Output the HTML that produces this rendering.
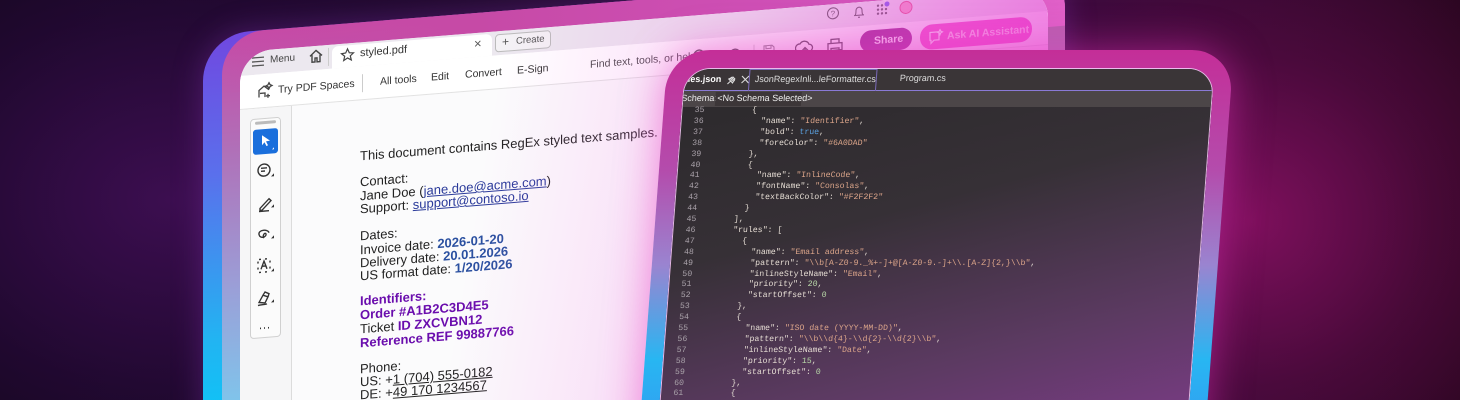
<!DOCTYPE html>
<html><head><meta charset="utf-8"><style>
*{margin:0;padding:0;box-sizing:border-box}
html,body{width:1460px;height:400px;overflow:hidden}
#root{position:absolute;left:0;top:0;width:1460px;height:400px;overflow:hidden;font-family:"Liberation Sans",sans-serif;
background:
radial-gradient(ellipse 330px 300px at 1250px 220px,rgba(130,16,95,.95),rgba(100,12,75,.5) 55%,rgba(0,0,0,0) 100%),
radial-gradient(ellipse 420px 320px at 170px 200px,rgba(60,14,80,1),rgba(40,10,60,.6) 60%,rgba(0,0,0,0) 100%),
linear-gradient(90deg,#14061c 0%,#230a30 40%,#3a0a40 70%,#2a0620 100%);}
.abs{position:absolute}
#pdf{left:203px;top:35px;width:862px;height:470px;border-radius:46px;transform-origin:0 0;transform:skewY(-4.6deg);
background:linear-gradient(180deg,#7048e0 0%,#5a70ec 30%,#22b4f2 65%,#10c2f6 80%,#3aa8ee 100%);
box-shadow:0 0 30px rgba(150,60,200,.35)}
#pdf .band{left:19px;top:0;right:0;bottom:0;border-radius:42px;
background:linear-gradient(180deg,#c64aa6 0%,#b070b8 25%,#9aa0d8 55%,#7ec6ec 80%,#90c8ee 100%)}
#pdf .band2{left:19px;top:0;right:0;height:60px;border-radius:42px 42px 0 0;
background:linear-gradient(90deg,rgba(200,70,160,0) 0%,#c64aa6 30%,#d050b8 70%,#e060c8 100%)}
#win{left:37px;top:20px;width:808px;height:450px;border-radius:32px 30px 0 0;background:#fbfbfc;overflow:hidden;color:#333;font-size:10px}
.row1{left:0;top:0;width:100%;height:24px;background:#ece8ef}
.row2{left:0;top:24px;width:100%;height:34px;background:#fff;border-bottom:1px solid #e2e2e2}
.tab{left:92px;top:2px;width:160px;height:22px;background:#fff;border-radius:6px 6px 0 0}
.panelcol{left:0;top:58px;width:52px;height:400px;background:#f6f6f7;border-right:1px solid #dcdcdc}
.panel{left:10px;top:68px;width:31px;height:220px;border:1px solid #d0d0d0;border-radius:4px;background:#fbfbfb}
.doc{left:120px;top:0;font-size:13px;line-height:13.4px;color:#222}
.doc p{position:absolute;left:0;white-space:nowrap}
.b{color:#2a50a0;font-weight:bold}
.l{color:#2a3a9a;text-decoration:underline}
.p{color:#6a0dad;font-weight:bold}
.u{text-decoration:underline}
#pink{left:0;top:0;width:100%;height:100%;background:linear-gradient(100deg,rgba(255,255,255,0) 30%,rgba(240,120,230,.25) 55%,rgba(236,80,220,.55) 80%,rgba(230,60,210,.7) 100%);pointer-events:none}
#code{left:668px;top:50px;width:566px;height:430px;border-radius:42px;transform-origin:0 0;transform:skewX(-4.3deg);
background:linear-gradient(180deg,#c42e98 0%,#b44cac 28%,#9a84d0 50%,#28b6f2 72%,#3a8cf0 100%);
box-shadow:0 0 40px rgba(230,50,190,.55)}
#cin{left:18px;top:18px;width:530px;height:430px;border-radius:26px 26px 0 0;overflow:hidden;
background:linear-gradient(165deg,#2b292b 0%,#363036 35%,#5c3a62 65%,#8a3c98 100%);
border:1.5px solid rgba(255,210,255,.85);border-bottom:none}
.ctab{left:0;top:0;width:100%;height:22px;background:#3a3537;border-bottom:1.5px solid #8a7ad6;font-size:9px;color:#ddd}
.cschema{left:0;top:22px;width:100%;height:16px;background:#4c4648;font-size:9px;color:#eee}
.lines{left:0;top:37px;font-family:"Liberation Mono",monospace;font-size:8.2px;line-height:10.9px;white-space:pre;color:#e2dad2}
.ln{position:absolute;left:0;width:22px;text-align:right;color:#a8a0a8}
.cd{position:absolute;left:40px}
.k{color:#e6ddd4}.s{color:#dca58a}.t{color:#5aa0e0}.n{color:#b8d8a8}
</style></head><body><div id="root">

<div id="pdf" class="abs">
 <div class="band abs"></div><div class="band2 abs"></div>
 <div id="win" class="abs">
  <div class="row1 abs"></div>
  <div class="tab abs"></div>
  <div class="row2 abs"></div>
  <svg class="abs" style="left:11px;top:5px" width="14" height="12"><path d="M1 2h12M1 6h12M1 10h12" stroke="#555" stroke-width="1.3"/></svg>
  <span class="abs" style="left:30px;top:5px;font-size:10px;color:#444">Menu</span>
  <svg class="abs" style="left:68px;top:2px" width="16" height="16"><path d="M2 8L8 2.5 14 8M4 7v7h3v-4h2v4h3V7" fill="none" stroke="#444" stroke-width="1.4"/></svg>
  <div class="abs" style="left:88px;top:3px;width:1px;height:18px;background:#ccc"></div>
  <svg class="abs" style="left:100px;top:4px" width="15" height="15"><path d="M7.5 1.5l1.8 4 4.2.4-3.2 2.8 1 4.2-3.8-2.3-3.8 2.3 1-4.2L1.5 5.9l4.2-.4z" fill="none" stroke="#444" stroke-width="1.2"/></svg>
  <span class="abs" style="left:120px;top:5px;font-size:11px;color:#333">styled.pdf</span>
  <span class="abs" style="left:234px;top:3px;font-size:13px;color:#555">×</span>
  <div class="abs" style="left:255px;top:3px;width:56px;height:18px;border:1px solid #bbb;border-radius:4px;background:#f4f2f5"></div>
  <span class="abs" style="left:262px;top:4px;font-size:12px;color:#555">+</span>
  <span class="abs" style="left:276px;top:6px;font-size:9.5px;color:#555">Create</span>
  <svg class="abs" style="left:586px;top:1px" width="100" height="18"><circle cx="7" cy="8" r="5.5" fill="none" stroke="#555" stroke-width="1.1"/><text x="4.6" y="11" font-size="8" fill="#555" font-family="Liberation Sans">?</text><path d="M28 12h10M29 12c1-1 1-3 1-5a3 3 0 0 1 6 0c0 2 0 4 1 5M32 14h2" fill="none" stroke="#555" stroke-width="1.1"/><g fill="#555"><circle cx="52" cy="4" r="1.2"/><circle cx="56" cy="4" r="1.2"/><circle cx="52" cy="8" r="1.2"/><circle cx="56" cy="8" r="1.2"/><circle cx="60" cy="8" r="1.2"/><circle cx="52" cy="12" r="1.2"/><circle cx="56" cy="12" r="1.2"/><circle cx="60" cy="12" r="1.2"/></g><circle cx="61" cy="3" r="2.5" fill="#6a5cf0"/><circle cx="80" cy="8" r="6" fill="#f4a0c0" stroke="#e05080"/></svg>
  <svg class="abs" style="left:16px;top:32px" width="18" height="18"><path d="M3 15V8l5-4 5 4M4 11h5v4M12 3l1-2 1 2 2 1-2 1-1 2-1-2-2-1zM12 12v4M10 14h4" fill="none" stroke="#444" stroke-width="1.3"/></svg>
  <span class="abs" style="left:38px;top:35px;font-size:10.5px;color:#333">Try PDF Spaces</span>
  <div class="abs" style="left:122px;top:32px;width:1px;height:18px;background:#ccc"></div>
  <span class="abs" style="left:140px;top:35px;font-size:10.5px;color:#333">All tools</span>
  <span class="abs" style="left:191px;top:35px;font-size:10.5px;color:#333">Edit</span>
  <span class="abs" style="left:225px;top:35px;font-size:10.5px;color:#333">Convert</span>
  <span class="abs" style="left:277px;top:35px;font-size:10.5px;color:#333">E-Sign</span>
  <span class="abs" style="left:350px;top:35px;font-size:10.5px;color:#444">Find text, tools, or help</span>
  <svg class="abs" style="left:452px;top:32px" width="100" height="20"><circle cx="7" cy="8" r="5" fill="none" stroke="#444" stroke-width="1.4"/><path d="M11 12l4 4" stroke="#444" stroke-width="1.4"/><path d="M38 14V10a5 5 0 0 1 10 0v4M37 11h3v5h-3zM46 11h3v5h-3z" fill="none" stroke="#444" stroke-width="1.3"/><path d="M62 2v16" stroke="#ccc"/><path d="M72 4h8l2 2v8h-10zM74 4v3h5V4M74 14v-4h6v4" fill="none" stroke="#888" stroke-width="1.1"/></svg>
  <svg class="abs" style="left:555px;top:32px" width="60" height="20"><path d="M4 13a4 4 0 0 1 1-8 5 5 0 0 1 9 1 3.5 3.5 0 0 1 0 7M10 17V9M7 12l3-3 3 3" fill="none" stroke="#444" stroke-width="1.3"/><path d="M36 7V3h8v4M33 7h14v7h-14zM36 12h8v5h-8z" fill="none" stroke="#444" stroke-width="1.3"/></svg>
  <div class="abs" style="left:620px;top:29px;width:52px;height:22px;border-radius:11px;background:#8e1f82"></div>
  <span class="abs" style="left:634px;top:34px;font-size:10.5px;color:#fff;font-weight:bold">Share</span>
  <div class="abs" style="left:680px;top:28px;width:112px;height:25px;border-radius:12px;background:#f04cc2"></div>
  <svg class="abs" style="left:688px;top:33px" width="16" height="16"><path d="M2 3h9v8H6l-3 3v-3H2zM12 1l.8 1.6 1.6.8-1.6.8L12 6l-.8-1.8L9.6 3.4l1.6-.8z" fill="none" stroke="#fff" stroke-width="1.2"/></svg>
  <span class="abs" style="left:707px;top:35px;font-size:10.5px;color:#fde;font-weight:bold">Ask AI Assistant</span>
  <div class="panelcol abs"></div>
  <div class="panel abs"></div>
  <div class="abs" style="left:15px;top:71px;width:21px;height:3px;background:#bbb;border-radius:2px"></div>
  <div class="abs" style="left:13px;top:79px;width:25px;height:25px;background:#1a6fdc;border-radius:3px"></div>
  <svg class="abs" style="left:13px;top:79px" width="25" height="25"><path d="M9 6l8 6-4 .5 2 4-1.5.7-2-4L9 16z" fill="#fff"/><path d="M21 19v2h-2z" fill="#fff"/></svg>
  <svg class="abs" style="left:13px;top:109px" width="25" height="200" fill="none" stroke="#333" stroke-width="1.4">
   <circle cx="11" cy="11" r="6"/><path d="M8 9h6M8 12h4"/><path d="M18 18h3v-3z" fill="#333" stroke="none"/>
   <path d="M7 49l9-9 2 2-9 9H7zM6 52h10" /><path d="M18 49h3v-3z" fill="#333" stroke="none"/>
   <path d="M16 74c-1-4-11-4-10 1s8 3 7 0c-1-2-4 1-2 4"/><path d="M18 80h3v-3z" fill="#333" stroke="none"/>
   <path d="M6 100h2M12 100h2M6 113h2M12 113h2M5 102v2M5 108v2M17 102v2M17 108v2" /><path d="M8 110l3-8 3 8M9 107h4"/><path d="M18 113h3v-3z" fill="#333" stroke="none"/>
   <path d="M6 143l4-7 5 2-3 6zM10 136l2-3 4 2-1 3M5 146c3-1 6 0 9-1"/><path d="M18 144h3v-3z" fill="#333" stroke="none"/>
   <path d="M7 169h1M11 169h1M15 169h1" stroke-width="1.6"/>
  </svg>
  <div class="doc abs">
   <p style="top:107px">This document contains RegEx styled text samples.</p>
   <p style="top:133px">Contact:</p>
   <p style="top:147px">Jane Doe (<span class="l">jane.doe@acme.com</span>)</p>
   <p style="top:160px">Support: <span class="l">support@contoso.io</span></p>
   <p style="top:187px">Dates:</p>
   <p style="top:201px">Invoice date: <span class="b">2026-01-20</span></p>
   <p style="top:214px">Delivery date: <span class="b">20.01.2026</span></p>
   <p style="top:227px">US format date: <span class="b">1/20/2026</span></p>
   <p style="top:252px" class="p">Identifiers:</p>
   <p style="top:266px"><span class="p">Order #A1B2C3D4E5</span></p>
   <p style="top:280px">Ticket <span class="p">ID ZXCVBN12</span></p>
   <p style="top:294px"><span class="p">Reference REF 99887766</span></p>
   <p style="top:320px">Phone:</p>
   <p style="top:333px">US: +<span class="u">1 (704) 555-0182</span></p>
   <p style="top:346px">DE: +<span class="u">49 170 1234567</span></p>
  </div>
  <div id="pink" class="abs"></div>
 </div>
</div>

<div id="code" class="abs">
 <div id="cin" class="abs">
  <div class="ctab abs">
   <span class="abs" style="left:-6px;top:5px;color:#fff;font-weight:bold">rules.json</span>
   <svg class="abs" style="left:40px;top:5px" width="30" height="12" fill="none" stroke="#ddd" stroke-width="1.1"><path d="M3 10l3-3M5 4l3 3M6 3l4 4M4 5l4-2 2 2-2 4z"/><path d="M17 2l7 7M24 2l-7 7"/></svg>
   <div class="abs" style="left:64px;top:0;width:128px;height:22px;border:1px solid #7a6ab8;border-bottom:none"></div>
   <span class="abs" style="left:70px;top:5px;color:#ddd">JsonRegexInli...leFormatter.cs</span>
   <span class="abs" style="left:215px;top:4px;color:#ddd">Program.cs</span>
  </div>
  <div class="cschema abs">
   <span class="abs" style="left:-2px;top:2px">Schema:</span>
   <div class="abs" style="left:32px;top:1px;width:86px;height:14px;background:#3c3638"></div>
   <span class="abs" style="left:34px;top:2px">&lt;No Schema Selected&gt;</span>
  </div>
  <div class="lines abs">
<span class="ln" style="top:0">35</span><span class="cd" style="top:0">      {</span>
<span class="ln" style="top:10.9px">36</span><span class="cd" style="top:10.9px">        <span class="k">"name"</span>: <span class="s">"Identifier"</span>,</span>
<span class="ln" style="top:21.8px">37</span><span class="cd" style="top:21.8px">        <span class="k">"bold"</span>: <span class="t">true</span>,</span>
<span class="ln" style="top:32.7px">38</span><span class="cd" style="top:32.7px">        <span class="k">"foreColor"</span>: <span class="s">"#6A0DAD"</span></span>
<span class="ln" style="top:43.6px">39</span><span class="cd" style="top:43.6px">      },</span>
<span class="ln" style="top:54.5px">40</span><span class="cd" style="top:54.5px">      {</span>
<span class="ln" style="top:65.4px">41</span><span class="cd" style="top:65.4px">        <span class="k">"name"</span>: <span class="s">"InlineCode"</span>,</span>
<span class="ln" style="top:76.3px">42</span><span class="cd" style="top:76.3px">        <span class="k">"fontName"</span>: <span class="s">"Consolas"</span>,</span>
<span class="ln" style="top:87.2px">43</span><span class="cd" style="top:87.2px">        <span class="k">"textBackColor"</span>: <span class="s">"#F2F2F2"</span></span>
<span class="ln" style="top:98.1px">44</span><span class="cd" style="top:98.1px">      }</span>
<span class="ln" style="top:109px">45</span><span class="cd" style="top:109px">    ],</span>
<span class="ln" style="top:119.9px">46</span><span class="cd" style="top:119.9px">    <span class="k">"rules"</span>: [</span>
<span class="ln" style="top:130.8px">47</span><span class="cd" style="top:130.8px">      {</span>
<span class="ln" style="top:141.7px">48</span><span class="cd" style="top:141.7px">        <span class="k">"name"</span>: <span class="s">"Email address"</span>,</span>
<span class="ln" style="top:152.6px">49</span><span class="cd" style="top:152.6px">        <span class="k">"pattern"</span>: <span class="s">"\\b[A-Z0-9._%+-]+@[A-Z0-9.-]+\\.[A-Z]{2,}\\b"</span>,</span>
<span class="ln" style="top:163.5px">50</span><span class="cd" style="top:163.5px">        <span class="k">"inlineStyleName"</span>: <span class="s">"Email"</span>,</span>
<span class="ln" style="top:174.4px">51</span><span class="cd" style="top:174.4px">        <span class="k">"priority"</span>: <span class="n">20</span>,</span>
<span class="ln" style="top:185.3px">52</span><span class="cd" style="top:185.3px">        <span class="k">"startOffset"</span>: <span class="n">0</span></span>
<span class="ln" style="top:196.2px">53</span><span class="cd" style="top:196.2px">      },</span>
<span class="ln" style="top:207.1px">54</span><span class="cd" style="top:207.1px">      {</span>
<span class="ln" style="top:218px">55</span><span class="cd" style="top:218px">        <span class="k">"name"</span>: <span class="s">"ISO date (YYYY-MM-DD)"</span>,</span>
<span class="ln" style="top:228.9px">56</span><span class="cd" style="top:228.9px">        <span class="k">"pattern"</span>: <span class="s">"\\b\\d{4}-\\d{2}-\\d{2}\\b"</span>,</span>
<span class="ln" style="top:239.8px">57</span><span class="cd" style="top:239.8px">        <span class="k">"inlineStyleName"</span>: <span class="s">"Date"</span>,</span>
<span class="ln" style="top:250.7px">58</span><span class="cd" style="top:250.7px">        <span class="k">"priority"</span>: <span class="n">15</span>,</span>
<span class="ln" style="top:261.6px">59</span><span class="cd" style="top:261.6px">        <span class="k">"startOffset"</span>: <span class="n">0</span></span>
<span class="ln" style="top:272.5px">60</span><span class="cd" style="top:272.5px">      },</span>
<span class="ln" style="top:283.4px">61</span><span class="cd" style="top:283.4px">      {</span>
  </div>
 </div>
</div>
</div></body></html>
